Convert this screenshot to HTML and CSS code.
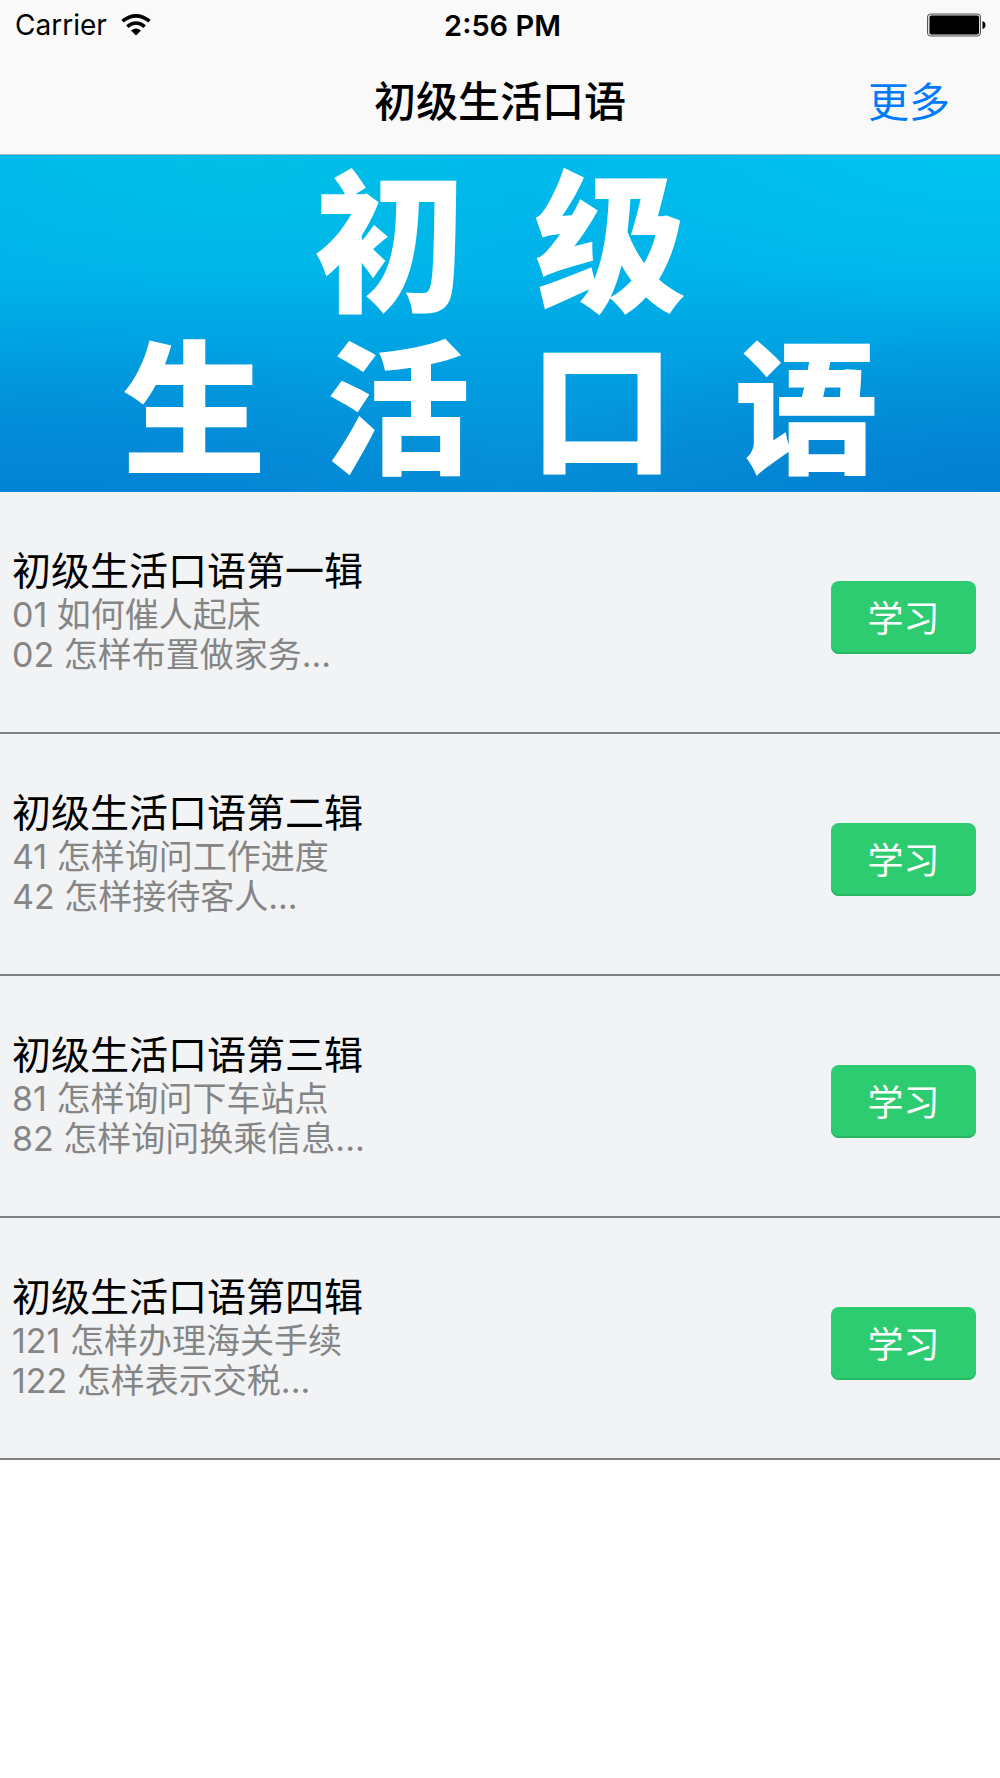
FILE: index.html
```html
<!DOCTYPE html>
<html lang="zh-CN">
<head>
<meta charset="utf-8">
<meta name="viewport" content="width=device-width, initial-scale=1">
<title>初级生活口语</title>
<link rel="stylesheet" href="styles.css">
</head>
<body>
<header class="top">
  <div class="status">
    <div class="status-left">
      <span>Carrier</span>
      <svg class="wifi" viewBox="0 0 30 22" aria-hidden="true">
        <path d="M1.500 7.200Q15 -3.600 28.500 7.200" fill="none" stroke="#000" stroke-width="3.600"/>
        <path d="M6.300 12.700Q15 5.300 23.700 12.700" fill="none" stroke="#000" stroke-width="3.600"/>
        <path d="M10 16.500Q15 12.500 20 16.500L15 21.500Z"/>
      </svg>
    </div>
    <time class="clock">2:56 PM</time>
    <svg class="battery" viewBox="0 0 60 24" aria-hidden="true">
      <rect x="1.500" y="1" width="53" height="22" rx="3" fill="#ddd" stroke="#555" stroke-width="1"/>
      <rect x="3.500" y="2.500" width="49.500" height="19" rx="2"/>
      <path d="M56.500 8Q59.500 9 59.500 12T56.500 16Z"/>
    </svg>
  </div>
  <nav class="navbar">
    <h1 class="nav-title">初级生活口语</h1>
    <button class="more" type="button">更多</button>
  </nav>
</header>
<main>
  <section class="banner" aria-label="初级生活口语">
    <div class="banner-line banner-short"><span>初</span><span>级</span></div>
    <div class="banner-line banner-long"><span>生</span><span>活</span><span>口</span><span>语</span></div>
  </section>
  <ul class="lessons">
    <li class="lesson">
      <div class="lesson-text">
        <h2 class="lesson-title">初级生活口语第一辑</h2>
        <p class="lesson-desc">01 如何催人起床<br>02 怎样布置做家务...</p>
      </div>
      <button class="study" type="button">学习</button>
    </li>
    <li class="lesson">
      <div class="lesson-text">
        <h2 class="lesson-title">初级生活口语第二辑</h2>
        <p class="lesson-desc">41 怎样询问工作进度<br>42 怎样接待客人...</p>
      </div>
      <button class="study" type="button">学习</button>
    </li>
    <li class="lesson">
      <div class="lesson-text">
        <h2 class="lesson-title">初级生活口语第三辑</h2>
        <p class="lesson-desc">81 怎样询问下车站点<br>82 怎样询问换乘信息...</p>
      </div>
      <button class="study" type="button">学习</button>
    </li>
    <li class="lesson">
      <div class="lesson-text">
        <h2 class="lesson-title">初级生活口语第四辑</h2>
        <p class="lesson-desc">121 怎样办理海关手续<br>122 怎样表示交税...</p>
      </div>
      <button class="study" type="button">学习</button>
    </li>
  </ul>
</main>
</body>
</html>
```
FILE: styles.css
```css
* {
  box-sizing: border-box;
}

body {
  margin: 0;
  background: #fff;
  color: #000;
  font-family: Inter, "Noto Sans CJK SC", sans-serif;
}

h1, h2, p, ul {
  margin: 0;
  padding: 0;
}

button {
  border: 0;
  font-family: inherit;
  cursor: pointer;
}

.top {
  background: #f9f9f9;
  border-bottom: 1px solid #a9b8bc;
}

.status {
  display: grid;
  grid-template-columns: 1fr auto 1fr;
  align-items: center;
  height: 50px;
  padding: 0 14px 0 15px;
  font-size: 28px;
}

.status-left {
  display: flex;
  align-items: center;
  gap: 14px;
}

.wifi {
  width: 30px;
  height: 22px;
}

.clock {
  padding-left: 4px;
  font-size: 29px;
  font-weight: 600;
}

.battery {
  justify-self: end;
  width: 60px;
  height: 24px;
}

.navbar {
  display: grid;
  grid-template-columns: 1fr auto 1fr;
  align-items: center;
  height: 104px;
  padding: 0 50px;
}

.nav-title {
  grid-column: 2;
  font-size: 42px;
  font-weight: 500;
  line-height: 60px;
}

.more {
  justify-self: end;
  padding: 0;
  background: none;
  color: #007aff;
  font-size: 41px;
  line-height: 60px;
}

.banner {
  display: flex;
  flex-direction: column;
  align-items: center;
  height: 337px;
  padding-top: 4px;
  background:
    radial-gradient(ellipse at 24% 0, rgba(0, 200, 225, .5), transparent 32%),
    radial-gradient(ellipse at 100% 0, rgba(0, 202, 242, .7), transparent 35%),
    radial-gradient(ellipse at 100% 100%, rgba(0, 120, 205, .7), transparent 35%),
    radial-gradient(ellipse at 5% 100%, rgba(0, 125, 210, .6), transparent 35%),
    linear-gradient(to bottom, #00b8ec, #00b3ea 35%, #00a1e2 60%, #0690d9 90%, #048cd6);
  color: #fff;
  font-weight: 900;
}

.banner-line {
  display: flex;
}

.banner-short {
  gap: 68px;
  font-size: 152px;
  line-height: 172px;
}

.banner-long {
  gap: 60px;
  font-size: 144px;
  line-height: 160px;
}

.lessons {
  list-style: none;
}

.lesson {
  display: flex;
  justify-content: space-between;
  align-items: center;
  height: 242px;
  padding: 10px 24px 0 12px;
  background: #f1f3f5;
  border-bottom: 2px solid #7f8183;
}

.lesson-text {
  padding-bottom: 12px;
}

.lesson-title {
  font-size: 39px;
  font-weight: 400;
  line-height: 48px;
}

.lesson-desc {
  color: #858585;
  font-size: 34px;
  line-height: 40px;
}

.study {
  width: 145px;
  height: 73px;
  padding: 0 0 2px;
  border-radius: 8px;
  background: #2ecc71;
  box-shadow: inset 0 -2px #29b765;
  color: #fff;
  font-size: 36px;
}
```
